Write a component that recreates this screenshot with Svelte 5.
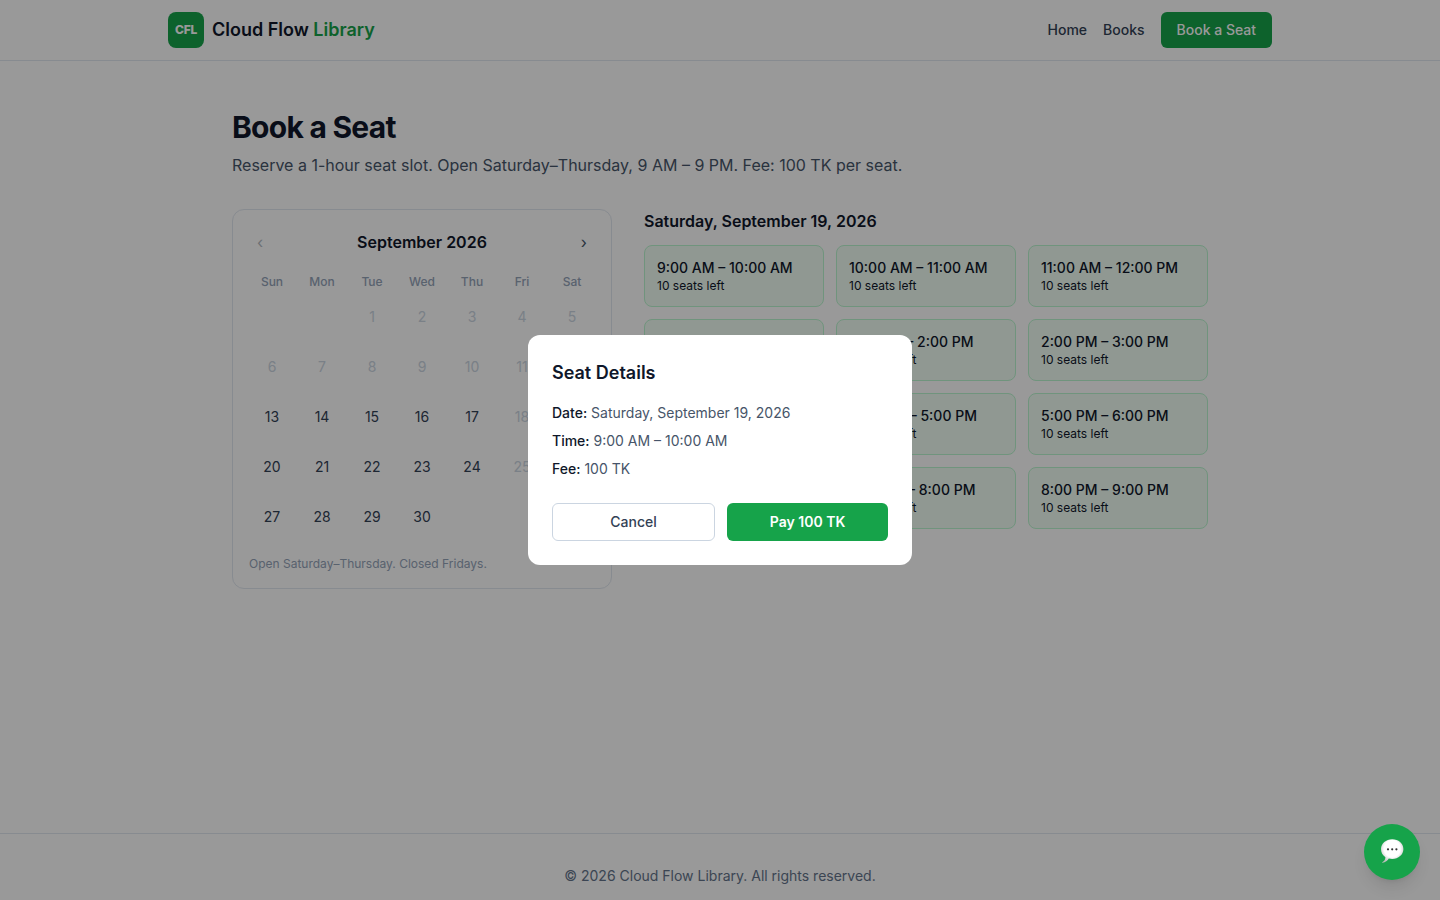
<script lang="ts">
	type Day = { date: number; disabled: boolean };

	const weekdays = ['Sun', 'Mon', 'Tue', 'Wed', 'Thu', 'Fri', 'Sat'];
	const leadingBlanks = 2;
	const firstOpenDate = 13;
	const fee = 100;

	const slots = [
		'9:00 AM – 10:00 AM',
		'10:00 AM – 11:00 AM',
		'11:00 AM – 12:00 PM',
		'12:00 PM – 1:00 PM',
		'1:00 PM – 2:00 PM',
		'2:00 PM – 3:00 PM',
		'3:00 PM – 4:00 PM',
		'4:00 PM – 5:00 PM',
		'5:00 PM – 6:00 PM',
		'6:00 PM – 7:00 PM',
		'7:00 PM – 8:00 PM',
		'8:00 PM – 9:00 PM'
	];

	// Past dates and Fridays cannot be booked.
	const days: Day[] = Array.from({ length: 30 }, (_, i) => {
		const date = i + 1;
		const friday = (i + leadingBlanks) % 7 === 5;
		return { date, disabled: date < firstOpenDate || friday };
	});

	let selected = $state(19);
	let slot = $state(slots[0]);
	let open = $state(true);

	const weekdayNames = ['Sunday', 'Monday', 'Tuesday', 'Wednesday', 'Thursday', 'Friday', 'Saturday'];
	let dateLabel = $derived(
		`${weekdayNames[(selected - 1 + leadingBlanks) % 7]}, September ${selected}, 2026`
	);

	function choose(value: string) {
		slot = value;
		open = true;
	}
</script>

<div class="page">
	<header class="site-header">
		<div class="header-inner">
			<a class="brand" href="/">
				<span class="logo">CFL</span>
				<span class="brand-name">Cloud Flow <span class="accent">Library</span></span>
			</a>
			<nav class="nav" aria-label="Main">
				<a href="/">Home</a>
				<a href="/books">Books</a>
				<a class="nav-cta" href="/book-a-seat">Book a Seat</a>
			</nav>
		</div>
	</header>

	<main class="main">
		<h1>Book a Seat</h1>
		<p class="lead">Reserve a 1-hour seat slot. Open Saturday–Thursday, 9 AM – 9 PM. Fee: {fee} TK per seat.</p>

		<div class="columns">
			<section class="calendar" aria-label="Calendar">
				<div class="month">
					<button type="button" aria-label="Previous month" disabled>‹</button>
					<h2>September 2026</h2>
					<button type="button" aria-label="Next month">›</button>
				</div>
				<div class="days">
					{#each weekdays as name (name)}
						<span class="weekday">{name}</span>
					{/each}
					{#each { length: leadingBlanks } as _}
						<span></span>
					{/each}
					{#each days as day (day.date)}
						<button
							type="button"
							class={['day', { selected: day.date === selected }]}
							disabled={day.disabled}
							onclick={() => (selected = day.date)}
						>
							{day.date}
						</button>
					{/each}
				</div>
				<p class="note">Open Saturday–Thursday. Closed Fridays.</p>
			</section>

			<section>
				<h2 class="slots-title">{dateLabel}</h2>
				<div class="slots">
					{#each slots as time (time)}
						<button type="button" class="slot" onclick={() => choose(time)}>
							<span class="slot-time">{time}</span>
							<span class="slot-left">10 seats left</span>
						</button>
					{/each}
				</div>
			</section>
		</div>
	</main>

	<footer class="site-footer">© 2026 Cloud Flow Library. All rights reserved.</footer>
</div>

{#if open}
	<div class="backdrop">
		<div class="modal" role="dialog" aria-modal="true" aria-labelledby="seat-title">
			<h2 id="seat-title">Seat Details</h2>
			<div class="details">
				<p><strong>Date:</strong> {dateLabel}</p>
				<p><strong>Time:</strong> {slot}</p>
				<p><strong>Fee:</strong> {fee} TK</p>
			</div>
			<div class="actions">
				<button type="button" class="cancel" onclick={() => (open = false)}>Cancel</button>
				<button type="button" class="pay">Pay {fee} TK</button>
			</div>
		</div>
	</div>
{/if}

<button type="button" class="chat" aria-label="Open chat">
	<svg viewBox="0 0 24 26" width="24" height="26" aria-hidden="true">
		<defs>
			<radialGradient id="bubble" cx="0.5" cy="0.4" r="0.6">
				<stop offset="0.6" stop-color="#ffffff" />
				<stop offset="1" stop-color="#bdbdbd" />
			</radialGradient>
		</defs>
		<path
			d="M12.200 0.300C6 0.300 1 4.500 1 10.100c0 3.500 1.600 6.300 4.400 8.100 0 2.200-1.200 3.900-3.100 5.100-.4.300-.2.600.2.500 2.800-.4 5.200-1.900 6.300-4.200 1.100.3 2.200.4 3.400.4 6.200 0 11.200-4.200 11.200-9.900S18.400 0.300 12.200 0.300z"
			fill="url(#bubble)"
		/>
		<circle cx="8" cy="10.300" r="1.100" fill="#333" />
		<circle cx="12.200" cy="10.300" r="1.100" fill="#333" />
		<circle cx="16.400" cy="10.300" r="1.100" fill="#333" />
	</svg>
</button>

<style>
	:global(body) {
		margin: 0;
		overflow: hidden;
		background: #fff;
		color: #0f172a;
		font-family: Inter, 'Liberation Sans', sans-serif;
		font-size: 16px;
		line-height: 24px;
		-webkit-font-smoothing: antialiased;
	}

	h1,
	h2,
	p {
		margin: 0;
	}

	a {
		color: inherit;
		text-decoration: none;
	}

	button {
		font: inherit;
		color: inherit;
		background: none;
		border: 0;
		padding: 0;
		cursor: pointer;
	}

	button:disabled {
		cursor: default;
	}

	.site-header {
		border-bottom: 1px solid #e2e8f0;
	}

	.header-inner {
		display: flex;
		align-items: center;
		justify-content: space-between;
		max-width: 1104px;
		margin: 0 auto;
		padding: 12px 24px;
	}

	.brand {
		display: flex;
		align-items: center;
		gap: 8px;
	}

	.logo {
		display: grid;
		place-items: center;
		width: 36px;
		height: 36px;
		border-radius: 8px;
		background: #16a34a;
		color: #fff;
		font-size: 12px;
		font-weight: 800;
		letter-spacing: -0.025em;
	}

	.brand-name {
		font-size: 18px;
		font-weight: 600;
	}

	.accent {
		color: #16a34a;
	}

	.nav {
		display: flex;
		align-items: center;
		gap: 16px;
		color: #334155;
		font-size: 14px;
		font-weight: 500;
		line-height: 20px;
	}

	.nav-cta {
		padding: 8px 16px;
		border-radius: 6px;
		background: #16a34a;
		color: #fff;
	}

	.main {
		box-sizing: border-box;
		max-width: 1024px;
		min-height: calc(100vh - 128px);
		margin: 0 auto;
		padding: 48px 24px;
	}

	h1 {
		font-size: 30px;
		font-weight: 700;
		line-height: 36px;
		letter-spacing: -0.025em;
	}

	.lead {
		margin-top: 8px;
		color: #475569;
	}

	.columns {
		display: grid;
		grid-template-columns: 380px 1fr;
		align-items: start;
		gap: 32px;
		margin-top: 32px;
	}

	.calendar {
		padding: 16px;
		border: 1px solid #e2e8f0;
		border-radius: 12px;
	}

	.month {
		display: flex;
		align-items: center;
		justify-content: space-between;
		margin-bottom: 16px;
	}

	.month h2,
	.slots-title {
		font-size: 16px;
		font-weight: 600;
	}

	.month button {
		padding: 4px 8px;
		color: #475569;
	}

	.month button:disabled {
		opacity: 0.4;
	}

	.days {
		display: grid;
		grid-template-columns: repeat(7, 1fr);
		gap: 4px;
		font-size: 14px;
		line-height: 20px;
		text-align: center;
	}

	.weekday {
		color: #94a3b8;
		font-size: 12px;
		font-weight: 500;
		line-height: 16px;
	}

	.day {
		aspect-ratio: 1;
		border-radius: 8px;
		color: #334155;
	}

	.day:disabled {
		color: #cbd5e1;
	}

	.day.selected {
		background: #16a34a;
		color: #fff;
	}

	.note {
		margin-top: 16px;
		color: #94a3b8;
		font-size: 12px;
		line-height: 16px;
	}

	.slots {
		display: grid;
		grid-template-columns: repeat(3, 1fr);
		gap: 12px;
		margin-top: 12px;
	}

	.slot {
		display: flex;
		flex-direction: column;
		padding: 12px;
		border: 1px solid #bbf7d0;
		border-radius: 8px;
		background: #f0fdf4;
		text-align: left;
	}

	.slot-time {
		font-size: 14px;
		font-weight: 500;
		line-height: 20px;
	}

	.slot-left {
		font-size: 12px;
		line-height: 16px;
	}

	.site-footer {
		padding: 32px 24px;
		border-top: 1px solid #e2e8f0;
		color: #64748b;
		font-size: 14px;
		line-height: 20px;
		text-align: center;
	}

	.backdrop {
		position: fixed;
		inset: 0;
		display: flex;
		align-items: center;
		justify-content: center;
		padding: 16px;
		background: rgb(0 0 0 / 0.4);
	}

	.modal {
		box-sizing: border-box;
		width: 100%;
		max-width: 384px;
		padding: 24px;
		border-radius: 12px;
		background: #fff;
	}

	.modal h2 {
		font-size: 18px;
		font-weight: 600;
		line-height: 28px;
	}

	.details {
		display: grid;
		gap: 8px;
		margin: 16px 0 24px;
		color: #475569;
		font-size: 14px;
		line-height: 20px;
	}

	.details strong {
		color: #0f172a;
		font-weight: 500;
	}

	.actions {
		display: flex;
		gap: 12px;
		font-size: 14px;
		font-weight: 500;
		line-height: 20px;
	}

	.actions button {
		box-sizing: border-box;
		flex: 1;
		padding: 8px 16px;
		border-radius: 6px;
	}

	.actions .cancel {
		border: 1px solid #cbd5e1;
		color: #334155;
	}

	.actions .pay {
		background: #16a34a;
		color: #fff;
		font-weight: 600;
	}

	.chat {
		position: fixed;
		right: 20px;
		bottom: 20px;
		display: grid;
		place-items: center;
		width: 56px;
		height: 56px;
		border-radius: 50%;
		background: #16a34a;
		box-shadow:
			0 10px 15px -3px rgb(0 0 0 / 0.1),
			0 4px 6px -4px rgb(0 0 0 / 0.1);
	}
</style>
